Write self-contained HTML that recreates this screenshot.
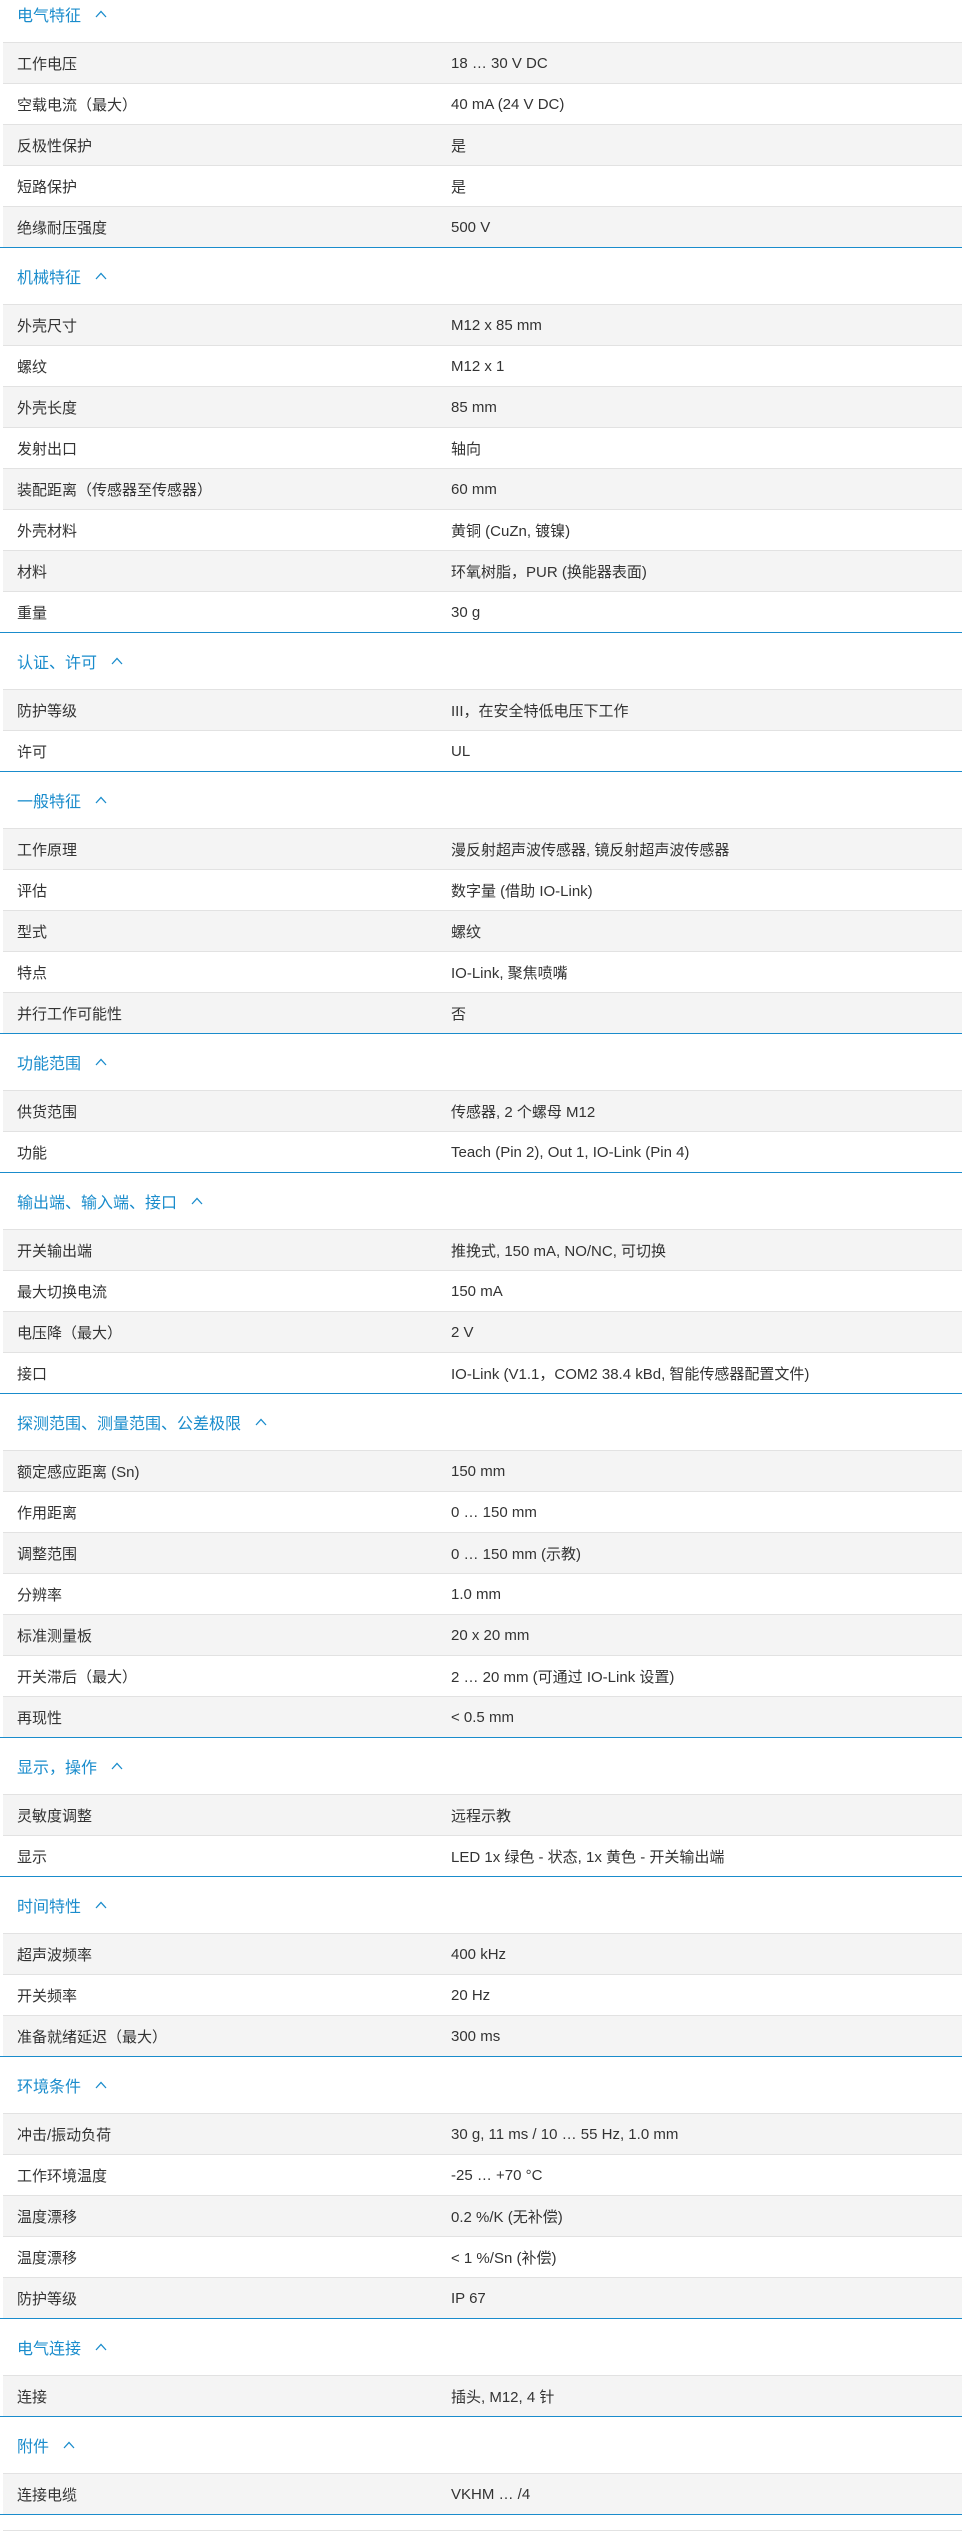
<!DOCTYPE html>
<html><head><meta charset="utf-8">
<style>
*{margin:0;padding:0;box-sizing:border-box}
html,body{width:962px;height:2545px;background:#fff;overflow:hidden}
body{font-family:"Liberation Sans","Noto Sans CJK SC",sans-serif;color:#333;font-size:15px}
.wrap{margin-top:-14px}
.sec{border-bottom:1px solid #1a8ccc}
.h{height:56px;display:flex;align-items:center;padding-left:17px;color:#1a8ccc;font-size:16px}
.h svg{margin-left:14px}
.r{height:41px;display:flex;align-items:center;border-top:1px solid #e2e2e2;margin-left:3px}
.r:nth-of-type(even){background:#f4f4f4}
.r span:first-child{width:448px;padding-left:14px;font-size:15px}
.r span:last-child{font-size:15px}
.tail{height:16px;border-bottom:1px solid #e2e2e2;margin-left:3px}
</style></head><body><div class="wrap">
<div class="sec"><div class="h">电气特征<svg width="12" height="8" viewBox="0 0 12 8"><polyline points="1,7 6,1.5 11,7" fill="none" stroke="#1a8ccc" stroke-width="1.3"/></svg></div>
<div class="r"><span>工作电压</span><span>18 … 30 V DC</span></div>
<div class="r"><span>空载电流（最大）</span><span>40 mA (24 V DC)</span></div>
<div class="r"><span>反极性保护</span><span>是</span></div>
<div class="r"><span>短路保护</span><span>是</span></div>
<div class="r"><span>绝缘耐压强度</span><span>500 V</span></div></div>
<div class="sec"><div class="h">机械特征<svg width="12" height="8" viewBox="0 0 12 8"><polyline points="1,7 6,1.5 11,7" fill="none" stroke="#1a8ccc" stroke-width="1.3"/></svg></div>
<div class="r"><span>外壳尺寸</span><span>M12 x 85 mm</span></div>
<div class="r"><span>螺纹</span><span>M12 x 1</span></div>
<div class="r"><span>外壳长度</span><span>85 mm</span></div>
<div class="r"><span>发射出口</span><span>轴向</span></div>
<div class="r"><span>装配距离（传感器至传感器）</span><span>60 mm</span></div>
<div class="r"><span>外壳材料</span><span>黄铜 (CuZn, 镀镍)</span></div>
<div class="r"><span>材料</span><span>环氧树脂，PUR (换能器表面)</span></div>
<div class="r"><span>重量</span><span>30 g</span></div></div>
<div class="sec"><div class="h">认证、许可<svg width="12" height="8" viewBox="0 0 12 8"><polyline points="1,7 6,1.5 11,7" fill="none" stroke="#1a8ccc" stroke-width="1.3"/></svg></div>
<div class="r"><span>防护等级</span><span>III，在安全特低电压下工作</span></div>
<div class="r"><span>许可</span><span>UL</span></div></div>
<div class="sec"><div class="h">一般特征<svg width="12" height="8" viewBox="0 0 12 8"><polyline points="1,7 6,1.5 11,7" fill="none" stroke="#1a8ccc" stroke-width="1.3"/></svg></div>
<div class="r"><span>工作原理</span><span>漫反射超声波传感器, 镜反射超声波传感器</span></div>
<div class="r"><span>评估</span><span>数字量 (借助 IO-Link)</span></div>
<div class="r"><span>型式</span><span>螺纹</span></div>
<div class="r"><span>特点</span><span>IO-Link, 聚焦喷嘴</span></div>
<div class="r"><span>并行工作可能性</span><span>否</span></div></div>
<div class="sec"><div class="h">功能范围<svg width="12" height="8" viewBox="0 0 12 8"><polyline points="1,7 6,1.5 11,7" fill="none" stroke="#1a8ccc" stroke-width="1.3"/></svg></div>
<div class="r"><span>供货范围</span><span>传感器, 2 个螺母 M12</span></div>
<div class="r"><span>功能</span><span>Teach (Pin 2), Out 1, IO-Link (Pin 4)</span></div></div>
<div class="sec"><div class="h">输出端、输入端、接口<svg width="12" height="8" viewBox="0 0 12 8"><polyline points="1,7 6,1.5 11,7" fill="none" stroke="#1a8ccc" stroke-width="1.3"/></svg></div>
<div class="r"><span>开关输出端</span><span>推挽式, 150 mA, NO/NC, 可切换</span></div>
<div class="r"><span>最大切换电流</span><span>150 mA</span></div>
<div class="r"><span>电压降（最大）</span><span>2 V</span></div>
<div class="r"><span>接口</span><span>IO-Link (V1.1，COM2 38.4 kBd, 智能传感器配置文件)</span></div></div>
<div class="sec"><div class="h">探测范围、测量范围、公差极限<svg width="12" height="8" viewBox="0 0 12 8"><polyline points="1,7 6,1.5 11,7" fill="none" stroke="#1a8ccc" stroke-width="1.3"/></svg></div>
<div class="r"><span>额定感应距离 (Sn)</span><span>150 mm</span></div>
<div class="r"><span>作用距离</span><span>0 … 150 mm</span></div>
<div class="r"><span>调整范围</span><span>0 … 150 mm (示教)</span></div>
<div class="r"><span>分辨率</span><span>1.0 mm</span></div>
<div class="r"><span>标准测量板</span><span>20 x 20 mm</span></div>
<div class="r"><span>开关滞后（最大）</span><span>2 … 20 mm (可通过 IO-Link 设置)</span></div>
<div class="r"><span>再现性</span><span>&lt; 0.5 mm</span></div></div>
<div class="sec"><div class="h">显示，操作<svg width="12" height="8" viewBox="0 0 12 8"><polyline points="1,7 6,1.5 11,7" fill="none" stroke="#1a8ccc" stroke-width="1.3"/></svg></div>
<div class="r"><span>灵敏度调整</span><span>远程示教</span></div>
<div class="r"><span>显示</span><span>LED 1x 绿色 - 状态, 1x 黄色 - 开关输出端</span></div></div>
<div class="sec"><div class="h">时间特性<svg width="12" height="8" viewBox="0 0 12 8"><polyline points="1,7 6,1.5 11,7" fill="none" stroke="#1a8ccc" stroke-width="1.3"/></svg></div>
<div class="r"><span>超声波频率</span><span>400 kHz</span></div>
<div class="r"><span>开关频率</span><span>20 Hz</span></div>
<div class="r"><span>准备就绪延迟（最大）</span><span>300 ms</span></div></div>
<div class="sec"><div class="h">环境条件<svg width="12" height="8" viewBox="0 0 12 8"><polyline points="1,7 6,1.5 11,7" fill="none" stroke="#1a8ccc" stroke-width="1.3"/></svg></div>
<div class="r"><span>冲击/振动负荷</span><span>30 g, 11 ms / 10 … 55 Hz, 1.0 mm</span></div>
<div class="r"><span>工作环境温度</span><span>-25 … +70 °C</span></div>
<div class="r"><span>温度漂移</span><span>0.2 %/K (无补偿)</span></div>
<div class="r"><span>温度漂移</span><span>&lt; 1 %/Sn (补偿)</span></div>
<div class="r"><span>防护等级</span><span>IP 67</span></div></div>
<div class="sec"><div class="h">电气连接<svg width="12" height="8" viewBox="0 0 12 8"><polyline points="1,7 6,1.5 11,7" fill="none" stroke="#1a8ccc" stroke-width="1.3"/></svg></div>
<div class="r"><span>连接</span><span>插头, M12, 4 针</span></div></div>
<div class="sec"><div class="h">附件<svg width="12" height="8" viewBox="0 0 12 8"><polyline points="1,7 6,1.5 11,7" fill="none" stroke="#1a8ccc" stroke-width="1.3"/></svg></div>
<div class="r"><span>连接电缆</span><span>VKHM … /4</span></div></div>
<div class="tail"></div>
</div></body></html>
